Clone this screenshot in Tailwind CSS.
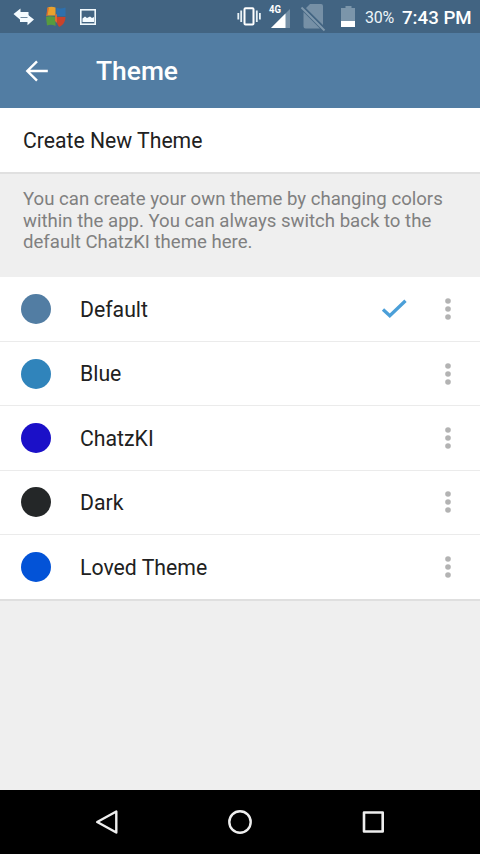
<!DOCTYPE html>
<html lang="en">
<head>
<meta charset="utf-8">
<title>Theme</title>
<script src="https://cdn.jsdelivr.net/npm/@tailwindcss/browser@4"></script>
</head>
<body class="w-[480px] h-[854px] overflow-hidden flex flex-col bg-[#efefef] font-['Roboto',sans-serif] text-[#212121]">
<!-- Status bar -->
<div class="h-[33px] shrink-0 bg-[#426482] flex items-center text-white">
  <svg class="w-[120px] h-[33px] shrink-0" viewBox="0 0 120 33">
    <path fill="#f4fbff" d="M13.500 14l7-5.500v3.500h8v5h-8v3z"/>
    <path fill="#f4fbff" d="M34 19.500l-6.500-5v3.200h-7.500v4.300h7.500v3.200z"/>
    <path fill="#e9a12d" d="M47.500 7.500q4-1.500 8 0v8h-8.500z"/>
    <path fill="#2e70ad" d="M56.500 8q4 1 9-0.500v8.500h-9z"/>
    <path fill="#579b3e" d="M46 17q4-1.500 9.500 0v9q-4-2-8.500-0.500z"/>
    <path fill="#c9432b" d="M56.500 17h9q0 6.500-6 10-3-2-3-10z"/>
    <path fill="#d96a30" d="M47.500 8l1.500-0.500-1.500 8-1.500 1zM55 15l2-1v9l-2-2z"/>
    <rect x="80.800" y="9.800" width="14.400" height="14.400" fill="none" stroke="#f0f8fc" stroke-width="1.600"/>
    <path fill="#f4fbff" d="M82.500 22v-3.500l2.500-2 2 1.500 3-1.500 2 1.500 2-1v5z"/>
  </svg>
  <svg class="w-[125px] h-[33px] ml-[112px] shrink-0" viewBox="232 0 125 33">
    <rect x="244.500" y="8.200" width="9" height="16.300" rx="1" fill="none" stroke="#fff" stroke-width="2"/>
    <path d="M241.200 10.500v11.500M238.300 13v6.500M256.800 10.500v11.500M259.900 13v6.500" stroke="#e8f2f7" stroke-width="1.800"/>
    <text x="269" y="13.200" font-size="10.500" font-weight="700" fill="#fff" textLength="12" lengthAdjust="spacingAndGlyphs">4G</text>
    <path fill="#7690a6" d="M290 9v19h-19z"/>
    <path fill="#fff" d="M285.500 13.500v14.500h-14.500z"/>
    <path fill="#7690a6" d="M310 4h11q2 0 2 2v22l-18.500-18.500zM303.500 12l16.500 16.500h-14.500q-2 0-2-2z"/>
    <path stroke="#426482" stroke-width="2" d="M303 6.500l22 22"/>
    <path stroke="#7f98ad" stroke-width="2" d="M301.500 7.500l23 23"/>
    <path fill="#7b95aa" d="M345.500 6h6v2h3.500v13h-14v-13h4.500z"/>
    <path fill="#fff" d="M341 21h14v6h-14z"/>
  </svg>
  <span class="ml-[8px] w-[37px] text-[16px] leading-[33px] whitespace-nowrap tracking-[-0.300px] text-[#edf5f9] pt-[2px]">30%</span>
  <span class="text-[18.700px] leading-[33px] font-medium whitespace-nowrap pt-[3px]">7:43 PM</span>
</div>
<!-- App bar -->
<header class="h-[75px] shrink-0 bg-[#527da3] flex items-center text-white">
  <svg class="ml-[24px] w-[26px] h-[26px] shrink-0" viewBox="0 0 26 26" fill="none" stroke="#fff" stroke-width="2.400"><path d="M23.800 13H4M13 3.300L3.300 13l9.700 9.700"/></svg>
  <h1 class="ml-[46px] text-[26.400px] font-medium leading-none pt-px">Theme</h1>
</header>
<button class="h-[64px] shrink-0 bg-white pl-[23px] text-left text-[21.200px] pt-[2px]">Create New Theme</button>
<p class="h-[105px] shrink-0 border-t-2 border-[#e0e0e0] pl-[23px] pt-[15px] text-[18.600px] leading-[21.700px] text-[#808080] whitespace-nowrap">You can create your own theme by changing colors<br>within the app. You can always switch back to the<br>default ChatzKI theme here.</p>
<!-- Theme list -->
<ul class="h-[324px] shrink-0 bg-white border-b-2 border-b-[#dfdfdf] flex flex-col text-[21.250px] pt-[0.500px]">
  <li class="h-[64.400px] shrink-0 border-b border-[#ebebeb] flex items-center pl-[21px]"><span class="size-[30px] rounded-full bg-[#527da3] mr-[29px]"></span><span class="grow pt-px">Default</span>
    <svg class="w-[26px] h-[20px] mr-[37px]" viewBox="0 0 26 20" fill="none" stroke="#4b9fd8" stroke-width="3.300"><path d="M2 10.500l6.800 6.200L24.500 1.800"/></svg>
    <svg class="w-[8px] h-[24px] mr-[28px]" viewBox="0 0 8 24" fill="#b3b3b3"><circle cx="4" cy="4" r="2.800"/><circle cx="4" cy="12" r="2.800"/><circle cx="4" cy="20" r="2.800"/></svg></li>
  <li class="h-[64.400px] shrink-0 border-b border-[#ebebeb] flex items-center pl-[21px]"><span class="size-[30px] rounded-full bg-[#3084bb] mr-[29px]"></span><span class="grow pt-px">Blue</span>
    <svg class="w-[8px] h-[24px] mr-[28px]" viewBox="0 0 8 24" fill="#b3b3b3"><circle cx="4" cy="4" r="2.800"/><circle cx="4" cy="12" r="2.800"/><circle cx="4" cy="20" r="2.800"/></svg></li>
  <li class="h-[64.400px] shrink-0 border-b border-[#ebebeb] flex items-center pl-[21px]"><span class="size-[30px] rounded-full bg-[#1b10c8] mr-[29px]"></span><span class="grow pt-[2px]">ChatzKI</span>
    <svg class="w-[8px] h-[24px] mr-[28px]" viewBox="0 0 8 24" fill="#b3b3b3"><circle cx="4" cy="4" r="2.800"/><circle cx="4" cy="12" r="2.800"/><circle cx="4" cy="20" r="2.800"/></svg></li>
  <li class="h-[64.400px] shrink-0 border-b border-[#ebebeb] flex items-center pl-[21px]"><span class="size-[30px] rounded-full bg-[#242728] mr-[29px]"></span><span class="grow pt-px">Dark</span>
    <svg class="w-[8px] h-[24px] mr-[28px]" viewBox="0 0 8 24" fill="#b3b3b3"><circle cx="4" cy="4" r="2.800"/><circle cx="4" cy="12" r="2.800"/><circle cx="4" cy="20" r="2.800"/></svg></li>
  <li class="h-[64.400px] shrink-0 flex items-center pl-[21px]"><span class="size-[30px] rounded-full bg-[#0353d7] mr-[29px]"></span><span class="grow pt-px">Loved Theme</span>
    <svg class="w-[8px] h-[24px] mr-[28px]" viewBox="0 0 8 24" fill="#b3b3b3"><circle cx="4" cy="4" r="2.800"/><circle cx="4" cy="12" r="2.800"/><circle cx="4" cy="20" r="2.800"/></svg></li>
</ul>
<!-- Navigation bar -->
<nav class="mt-auto h-[64px] shrink-0 bg-black flex items-center justify-between px-[94px]">
  <svg class="size-[26px]" viewBox="0 0 26 26" fill="none" stroke="#eee" stroke-width="2.400" stroke-linejoin="round"><path d="M22.300 2.500v21L3.200 13z"/></svg>
  <svg class="size-[26px]" viewBox="0 0 26 26" fill="none" stroke="#eee" stroke-width="2.400"><circle cx="13" cy="13" r="10.700"/></svg>
  <svg class="size-[26px]" viewBox="0 0 26 26" fill="none" stroke="#eee" stroke-width="2.600" stroke-linejoin="round"><path d="M4 3.500h18.700v19H4z"/></svg>
</nav>
</body>
</html>
